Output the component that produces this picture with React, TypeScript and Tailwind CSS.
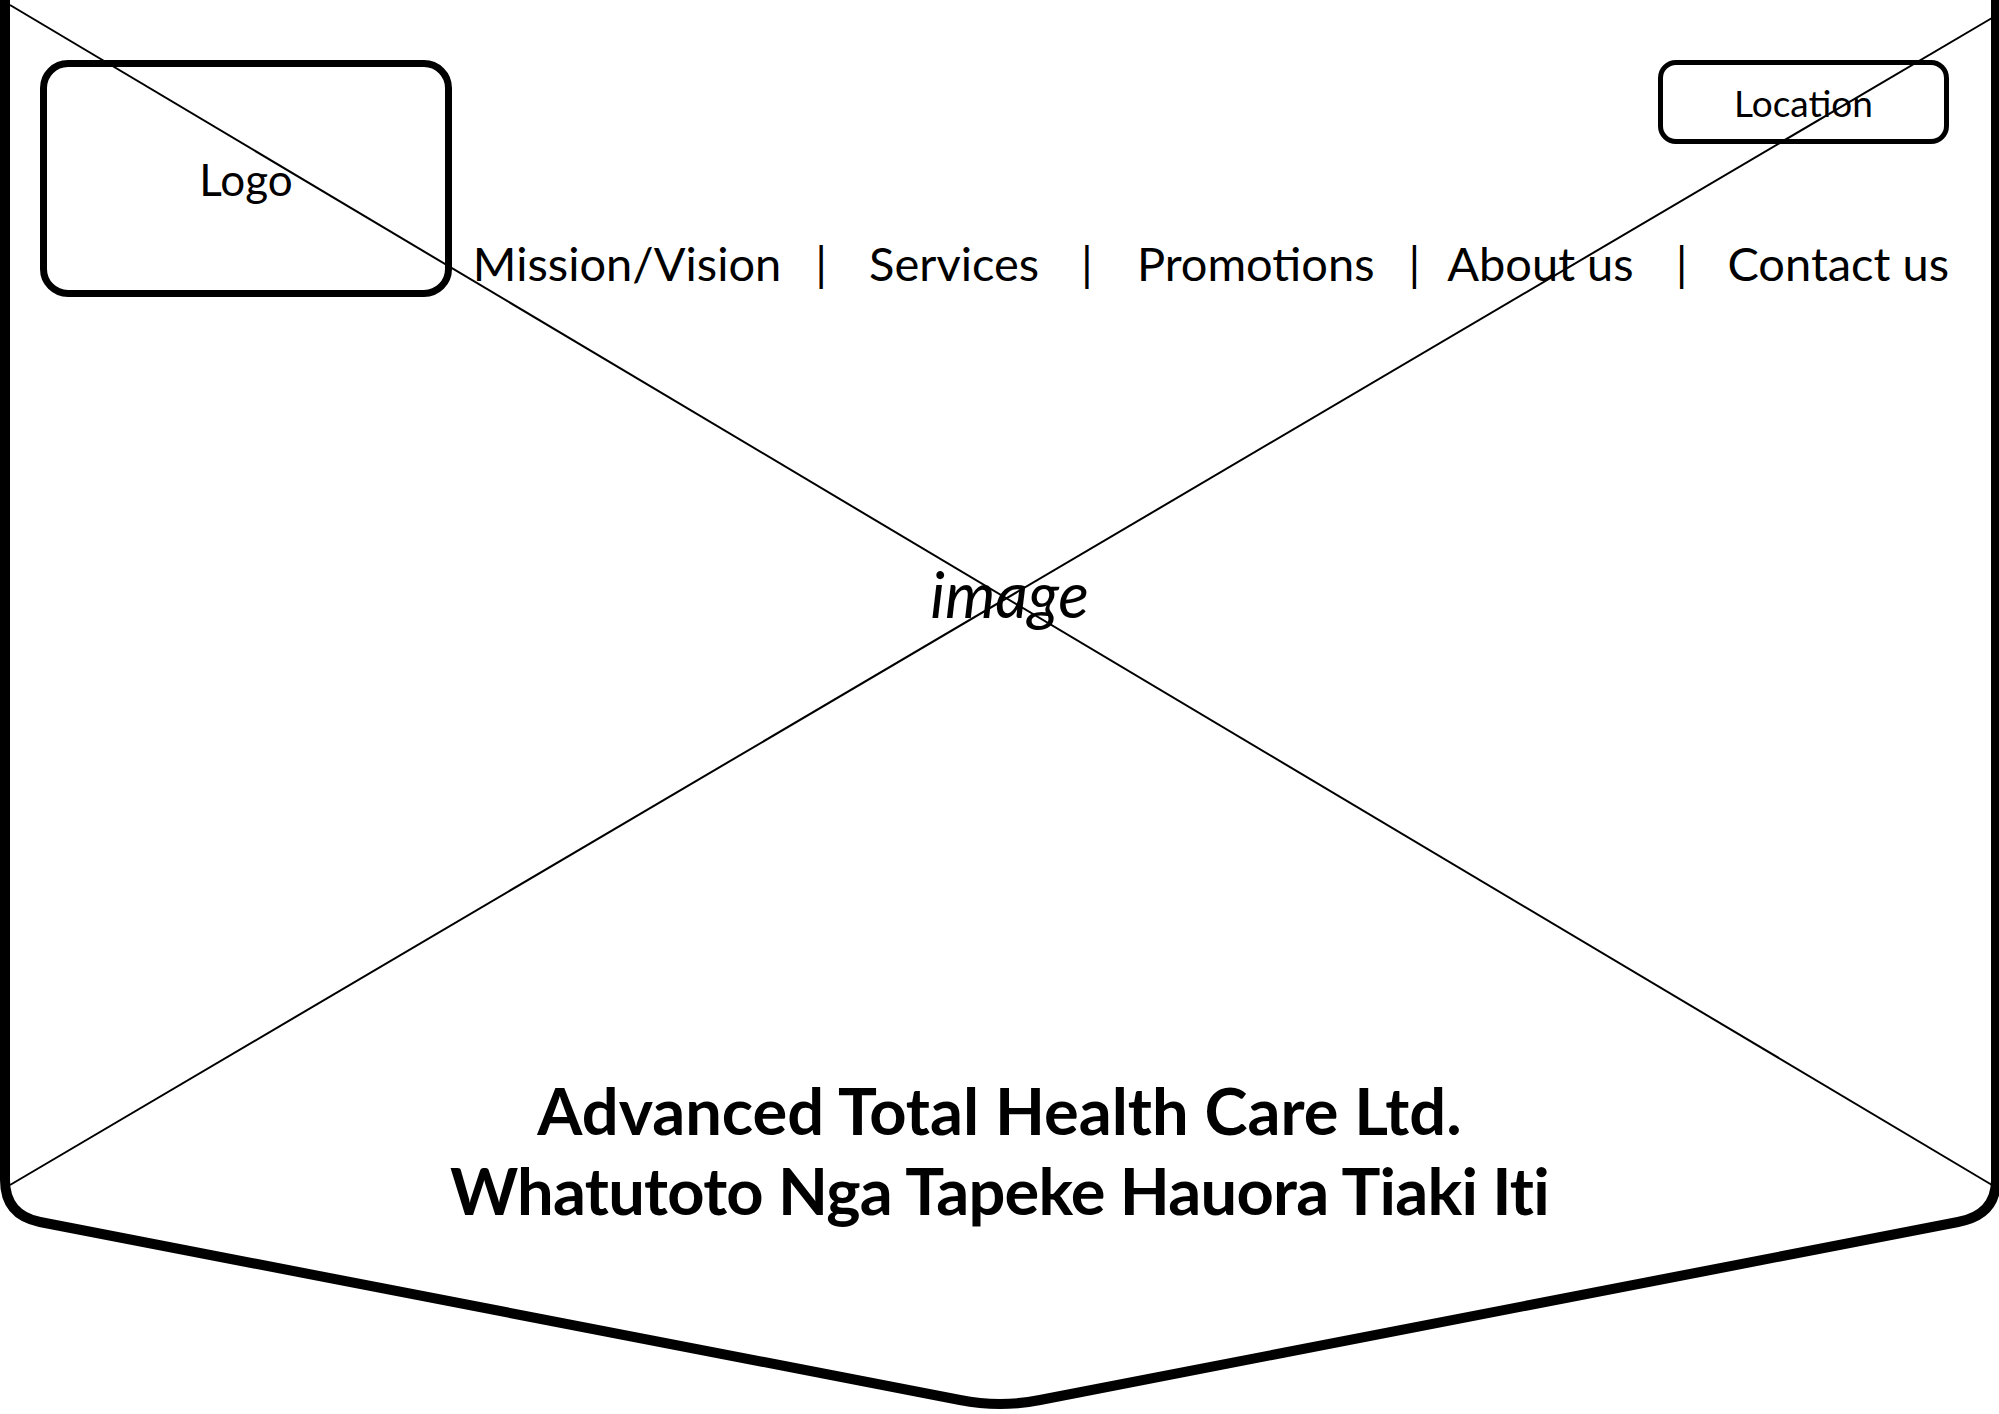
import React from "react";

function Frame() {
  return (
    <svg
      className="absolute inset-0 pointer-events-none"
      width="1999"
      height="1414"
      viewBox="0 0 1999 1414"
      fill="none"
    >
      <line x1="10" y1="5" x2="1992" y2="1185" stroke="#000" strokeWidth="2" />
      <line x1="1992" y1="18" x2="10" y2="1185" stroke="#000" strokeWidth="2" />
      <path
        d="M5 -20 L5 1180 Q5 1215 40 1222 L960 1400 Q1000 1408 1040 1400 L1958 1222 Q1996 1215 1996 1180 L1996 -20"
        stroke="#000"
        strokeWidth="10"
        strokeLinejoin="round"
      />
    </svg>
  );
}

const Sep = ({ l, r }: { l: string; r: string }) => (
  <span className={`${l} ${r}`}>|</span>
);

export default function App() {
  return (
    <div
      className="relative w-full h-[1414px] overflow-hidden bg-white text-black"
      style={{ fontFamily: "Lato, 'Open Sans', sans-serif" }}
    >
      <Frame />
      <div className="relative flex flex-col">
        <header className="flex items-start pt-[60px] pl-[40px] pr-[50px]">
          <div className="w-[412px] h-[237px] shrink-0 border-[7px] border-black rounded-[28px] flex items-center justify-center">
            <span className="text-[44px] leading-none">Logo</span>
          </div>
          <div className="flex-1 flex flex-col items-end">
            <div className="w-[291px] h-[84px] border-[5px] border-black rounded-[18px] flex items-center justify-center">
              <span className="text-[37px] leading-none">Location</span>
            </div>
            <nav className="mt-[96px] flex items-center text-[47px] leading-none whitespace-nowrap">
              <span>Mission/Vision</span>
              <Sep l="ml-[34px]" r="mr-[42px]" />
              <span>Services</span>
              <Sep l="ml-[42px]" r="mr-[44px]" />
              <span>Promotions</span>
              <Sep l="ml-[34px]" r="mr-[27px]" />
              <span>About us</span>
              <Sep l="ml-[42px]" r="mr-[40px]" />
              <span>Contact us</span>
            </nav>
          </div>
        </header>
        <div className="mt-[265px] pl-[20px] text-center text-[64px] leading-[64px] italic">
          image
        </div>
        <div className="mt-[444px] text-center text-[65px] leading-[80px] font-bold">
          <div>Advanced Total Health Care Ltd.</div>
          <div className="tracking-[-0.75px]">Whatutoto Nga Tapeke Hauora Tiaki Iti</div>
        </div>
      </div>
    </div>
  );
}
